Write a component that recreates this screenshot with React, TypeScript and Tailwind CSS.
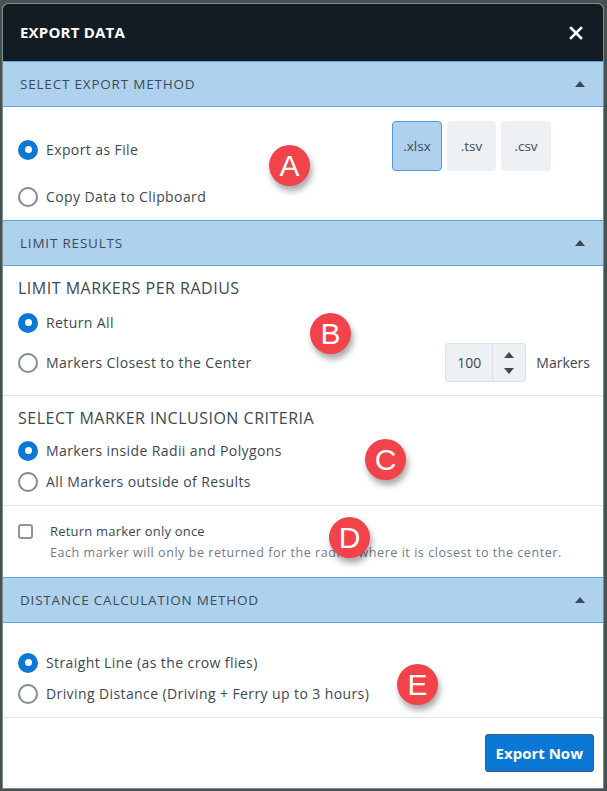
import React from "react";

const font = { fontFamily: '"Open Sans", "Noto Sans", sans-serif' };

function Radio({ checked, label }: { checked?: boolean; label: string }) {
  return (
    <div className="flex items-center gap-[8px]">
      {checked ? (
        <span className="w-[20px] h-[20px] rounded-full bg-[#0a78d4] flex items-center justify-center shrink-0">
          <span className="w-[7px] h-[7px] rounded-full bg-white" />
        </span>
      ) : (
        <span className="w-[20px] h-[20px] rounded-full border-2 border-[#7d8a95] bg-white shrink-0" />
      )}
      <span className="text-[14px] text-[#3c4852] tracking-[0.4px]">{label}</span>
    </div>
  );
}

function SectionHeader({ title }: { title: string }) {
  return (
    <div className="h-[46px] bg-[#aed2ee] border-y border-[#5aa7e2] flex items-center justify-between pl-[17px] pr-[18px] shrink-0">
      <span className="text-[13.5px] text-[#3d4a55] tracking-[0.8px] uppercase">{title}</span>
      <svg width="10" height="6" viewBox="0 0 10 6">
        <path d="M0 6 L5 0 L10 6 Z" fill="#3d4a55" />
      </svg>
    </div>
  );
}

function Badge({ letter, className }: { letter: string; className: string }) {
  return (
    <div
      className={
        "absolute w-[41px] h-[41px] rounded-full bg-[#f2424a] text-white flex items-center justify-center text-[30px] shadow-[2px_5px_6px_rgba(0,0,0,0.35)] " +
        className
      }
      style={{ fontFamily: '"Liberation Sans", Arial, sans-serif' }}
    >
      {letter}
    </div>
  );
}

export default function App() {
  return (
    <div className="w-[607px] h-[791px] bg-[#46524f] pt-[3px] pl-[2px] pr-[2px]" style={font}>
      <div className="relative w-[602px] h-[786px] bg-white border border-[#7c8b90] rounded-t-[6px] overflow-hidden flex flex-col">
        {/* Header */}
        <div className="h-[57px] bg-[#131c22] flex items-center justify-between pl-[17px] pr-[20px] shrink-0">
          <span className="text-white font-bold text-[15px] tracking-[0.2px]">EXPORT DATA</span>
          <svg width="14" height="14" viewBox="0 0 14 14">
            <path d="M2 2 L12 12 M12 2 L2 12" stroke="white" strokeWidth="2.6" strokeLinecap="square" />
          </svg>
        </div>

        <SectionHeader title="Select Export Method" />
        <div className="h-[113px] flex justify-between pl-[15px] pr-[52px] shrink-0">
          <div className="flex flex-col pt-[32px] gap-[26px]">
            <Radio checked label="Export as File" />
            <Radio label="Copy Data to Clipboard" />
          </div>
          <div className="flex gap-[5px] pt-[14px]">
            <div className="w-[50px] h-[50px] rounded-[4px] bg-[#aed2ee] border border-[#4a9de0] flex items-center justify-center text-[13.5px] text-[#3c4852]">.xlsx</div>
            <div className="w-[49px] h-[50px] rounded-[4px] bg-[#eef1f4] flex items-center justify-center text-[13.5px] text-[#3c4852]">.tsv</div>
            <div className="w-[50px] h-[50px] rounded-[4px] bg-[#eef1f4] flex items-center justify-center text-[13.5px] text-[#3c4852]">.csv</div>
          </div>
        </div>

        <SectionHeader title="Limit Results" />
        <div className="h-[130px] border-b border-[#dfe5ea] pl-[15px] pr-[13px] pt-[10px] shrink-0">
          <div className="text-[16px] text-[#3c4852] tracking-[0.5px] leading-[24px]">LIMIT MARKERS PER RADIUS</div>
          <div className="mt-[12px]">
            <Radio checked label="Return All" />
          </div>
          <div className="flex items-center justify-between mt-[10px]">
            <Radio label="Markers Closest to the Center" />
            <div className="flex items-center gap-[10px]">
              <div className="flex h-[39px] w-[81px] rounded-[3px] bg-[#eef1f4] border border-[#dbe1e6]">
                <div className="w-[47px] flex items-center justify-center text-[14px] text-[#3c4852] border-r border-[#dbe1e6]">100</div>
                <div className="flex-1 flex flex-col items-center justify-center gap-[10px]">
                  <svg width="10" height="6" viewBox="0 0 10 6"><path d="M0 6 L5 0 L10 6 Z" fill="#3d4a55" /></svg>
                  <svg width="10" height="6" viewBox="0 0 10 6"><path d="M0 0 L5 6 L10 0 Z" fill="#3d4a55" /></svg>
                </div>
              </div>
              <span className="text-[14px] text-[#3c4852] tracking-[0px]">Markers</span>
            </div>
          </div>
        </div>

        <div className="h-[110px] border-b border-[#dfe5ea] px-[15px] pt-[10px] shrink-0">
          <div className="text-[16px] text-[#3c4852] tracking-[0.5px] leading-[24px]">SELECT MARKER INCLUSION CRITERIA</div>
          <div className="mt-[10px] flex flex-col gap-[10px]">
            <Radio checked label="Markers inside Radii and Polygons" />
            <Radio label="All Markers outside of Results" />
          </div>
        </div>

        <div className="h-[71px] pl-[15px] pt-[16px] flex gap-[17px] shrink-0">
          <span className="w-[15px] h-[15px] mt-[2px] rounded-[3px] border-2 border-[#8995a0] bg-white shrink-0" />
          <div>
            <div className="text-[13px] text-[#3c4852] tracking-[0.2px]">Return marker only once</div>
            <div className="text-[12.5px] text-[#6f7c87] tracking-[0.55px] mt-[2px] whitespace-nowrap">Each marker will only be returned for the radius where it is closest to the center.</div>
          </div>
        </div>

        <SectionHeader title="Distance Calculation Method" />
        <div className="h-[95px] border-b border-[#dfe5ea] pl-[15px] pt-[29px] flex flex-col gap-[10px] shrink-0">
          <Radio checked label="Straight Line (as the crow flies)" />
          <Radio label="Driving Distance (Driving + Ferry up to 3 hours)" />
        </div>

        <div className="flex-1 flex justify-end items-start pr-[9px] pt-[16px]">
          <button className="h-[38px] px-[10px] bg-[#0a78d4] border border-[#3a5a75] rounded-[3px] text-white font-bold text-[15px]">Export Now</button>
        </div>

        <Badge letter="A" className="left-[266px] top-[141px]" />
        <Badge letter="B" className="left-[307px] top-[309px]" />
        <Badge letter="C" className="left-[362px] top-[435px]" />
        <Badge letter="D" className="left-[326px] top-[513px]" />
        <Badge letter="E" className="left-[394px] top-[660px]" />
      </div>
    </div>
  );
}
